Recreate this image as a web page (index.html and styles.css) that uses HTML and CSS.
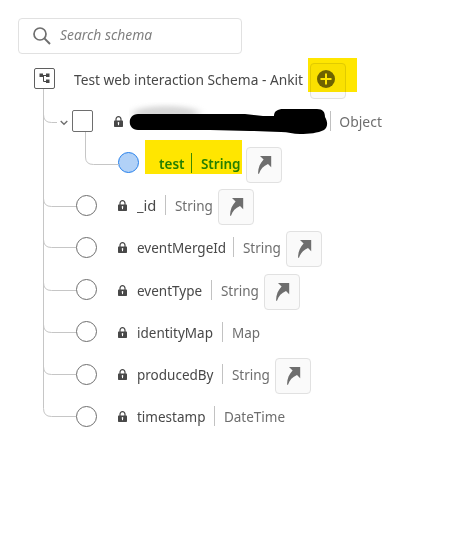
FILE: index.html
```html
<!DOCTYPE html>
<html lang="en">
<head>
<meta charset="utf-8">
<title>Schema</title>
<link rel="stylesheet" href="styles.css">
</head>
<body>
<svg width="0" height="0" class="defs">
  <symbol id="lock" viewBox="0 0 9 11"><path d="M2 5V3.2a2.5 2.5 0 0 1 5 0V5" fill="none" stroke="#484848" stroke-width="1.2"/><rect y="4.6" width="9" height="6.4" rx=".7" fill="#484848"/><path d="M4.5 6.2v3M3.7 7h1.6" stroke="#fff" stroke-width="1"/></symbol>
  <symbol id="arrow" viewBox="0 0 14 18"><path d="M2 0H13.200V11.200L10 8C5.500 10 2.500 13 1 17.800H.1C-.1 12 2 7.300 5.600 3.500Z" fill="#6e6e6e"/></symbol>
</svg>
<main class="panel">
  <div class="search">
    <svg width="18" height="18" viewBox="0 0 18 18"><circle cx="7" cy="7" r="6" fill="none" stroke="#6e6e6e" stroke-width="1.7"/><path d="M11.4 11.4L17 17" stroke="#6e6e6e" stroke-width="2"/></svg>
    <span class="text">Search schema</span>
  </div>
  <div class="tree">
    <svg class="lines" width="100" height="370" viewBox="0 57 100 370" fill="none" stroke="#c6c6c6" stroke-width="1">
      <path d="M43.5 89V408.500Q43.500 416.500 51.500 416.500H76M43.500 114.500Q43.500 122.500 51.500 122.500H57M43.500 198.500Q43.500 206.500 51.500 206.500H76M43.500 239.500Q43.500 247.500 51.500 247.500H76M43.500 282.500Q43.500 290.500 51.500 290.500H76M43.500 324.500Q43.500 332.500 51.500 332.500H76M43.500 366.500Q43.500 374.500 51.500 374.500H76"/>
    </svg>
    <div class="row root">
      <svg class="root-icon" width="21" height="21" viewBox="0 0 21 21"><rect x=".5" y=".5" width="20" height="20" rx="1.500" fill="#fff" stroke="#5f5f5f"/><path d="M8 7.500H13M9.500 7V13.500H13" fill="none" stroke="#484848"/><path d="M5.500 5.500h3.500v3.500h-3.500zM12 5.500h3.500v3.500H12zM12 11.500h3.500v3.500H12z" fill="#484848"/></svg>
      <span class="name text">Test web interaction Schema - Ankit</span>
      <span class="button"><svg width="18" height="18" viewBox="0 0 18 18"><circle cx="9" cy="9" r="9" fill="#6e6e6e"/><path d="M9 3.500v11M3.500 9h11" stroke="#fff" stroke-width="2"/></svg></span>
    </div>
    <div class="row object">
      <svg class="chevron" width="8" height="6" viewBox="0 0 8 6"><path d="M.7 1L4 4.300L7.300 1" fill="none" stroke="#6e6e6e" stroke-width="1.300"/></svg>
      <i class="node square"></i>
      <svg class="lock"><use href="#lock"/></svg>
      <span class="name"></span><span class="type text">Object</span>
    </div>
    <div class="row test">
      <svg class="branch" width="34" height="38" viewBox="0 0 34 38"><path d="M.5 0V25Q.5 32.500 8.500 32.500H34" fill="none" stroke="#c6c6c6"/></svg>
      <i class="node selected"></i>
      <span class="name text">test</span><span class="type text">String</span>
      <span class="button"><svg class="arrow"><use href="#arrow"/></svg></span>
    </div>
    <div class="row id"><i class="node"></i><svg class="lock"><use href="#lock"/></svg><span class="name text">_id</span><span class="type text">String</span><span class="button"><svg class="arrow"><use href="#arrow"/></svg></span></div>
    <div class="row merge"><i class="node"></i><svg class="lock"><use href="#lock"/></svg><span class="name text">eventMergeId</span><span class="type text">String</span><span class="button"><svg class="arrow"><use href="#arrow"/></svg></span></div>
    <div class="row event"><i class="node"></i><svg class="lock"><use href="#lock"/></svg><span class="name text">eventType</span><span class="type text">String</span><span class="button"><svg class="arrow"><use href="#arrow"/></svg></span></div>
    <div class="row identity"><i class="node"></i><svg class="lock"><use href="#lock"/></svg><span class="name text">identityMap</span><span class="type text">Map</span></div>
    <div class="row produced"><i class="node"></i><svg class="lock"><use href="#lock"/></svg><span class="name text">producedBy</span><span class="type text">String</span><span class="button"><svg class="arrow"><use href="#arrow"/></svg></span></div>
    <div class="row time"><i class="node"></i><svg class="lock"><use href="#lock"/></svg><span class="name text">timestamp</span><span class="type text">DateTime</span></div>
  </div>
  <div class="mark mark-add"></div>
  <div class="mark mark-test"></div>
  <svg class="redaction" width="200" height="36" viewBox="129 102 200 36">
    <defs><filter id="spray" x="-20%" y="-80%" width="140%" height="260%"><feGaussianBlur stdDeviation="4 2.500"/></filter></defs>
    <ellipse cx="166" cy="113" rx="33" ry="7" fill="#ccc" opacity=".8" filter="url(#spray)"/>
    <path d="M138 114H245L263 116H274C274 111 278 109 283 109H317C323 109 325 112 325 117C328 122 328 127 324 130C318 133 309 134 300 134C293 134 288 132 281 132C269 132 260 131 250 131L210 130H138C127 130 127 114 138 114Z"/>
  </svg>
</main>
</body>
</html>
```
FILE: styles.css
```css
* { box-sizing: border-box; }
body { margin: 0; background: #fff; font: 15px/20px "Noto Sans", "Open Sans", sans-serif; color: #484848; }
.defs { position: absolute; }
.panel { position: relative; width: 454px; height: 550px; padding-top: 18px; overflow: hidden; }
.search { display: flex; align-items: center; width: 224px; height: 36px; margin-left: 18px; padding-left: 14px; border: 1px solid #e1e1e1; border-radius: 4px; color: #808080; font-style: italic; }
.search .text { margin: -5px 0 0 9px; transform: scaleX(.925); }
.text { display: block; white-space: nowrap; transform: scaleX(.9); transform-origin: left center; }
.tree { position: relative; padding-top: 3.400px; }
.lines { position: absolute; left: 0; top: 3px; }
.row { position: relative; display: flex; align-items: center; height: 42.220px; padding-left: 76px; }
.root { padding-left: 34px; }
.root .name { width: 236px; margin-left: 19px; transform: scaleX(.916); }
.root .button { margin-left: 0; }
.node { flex: none; width: 21px; height: 21px; border: 1px solid #6e6e6e; border-radius: 50%; background: #fff; }
.square { width: 21px; height: 22px; border-radius: 2px; }
.selected { border-color: #2680eb; background: #b1d1f7; }
.chevron { margin: 4px 4px 0 0; }
.object { padding-left: 60px; }
.test { padding-left: 118px; color: #268e00; font-weight: 600; }
.branch { position: absolute; left: 85px; top: -10px; }
.lock { flex: none; width: 9px; height: 11px; margin: 1px 0 0 21px; }
.name { flex: none; height: 20px; margin-left: 10px; }
.type { flex: none; width: 53px; height: 20px; padding-left: 10px; color: #6e6e6e; border-left: 1px solid #bcbcbc; }
.button { display: flex; align-items: center; justify-content: center; flex: none; width: 36px; height: 36px; margin-top: 4px; border: 1px solid #e1e1e1; border-radius: 4px; background: #fafafa; }
.root .button svg { margin: -3px 4px 0 0; }
.arrow { width: 14px; height: 18px; margin-left: 1px; }
.object .name { width: 197px; }
.object .type { transform: scaleX(.93); padding-left: 9px; }
.test .name { width: 32px; margin-left: 20px; }
.test .type { width: 55px; color: inherit; border-color: #268e00; }
.id .name { width: 28px; transform: scaleX(.98); }
.merge .name { width: 96px; }
.event .name { width: 74px; }
.identity .name, .produced .name { width: 85px; }
.time .name { width: 77px; }
.mark { position: absolute; background: #ffe600; mix-blend-mode: multiply; }
.mark-add { left: 308px; top: 58px; width: 49px; height: 34px; }
.mark-test { left: 145px; top: 140px; width: 97px; height: 34px; }
.redaction { position: absolute; left: 129px; top: 102px; }
```
